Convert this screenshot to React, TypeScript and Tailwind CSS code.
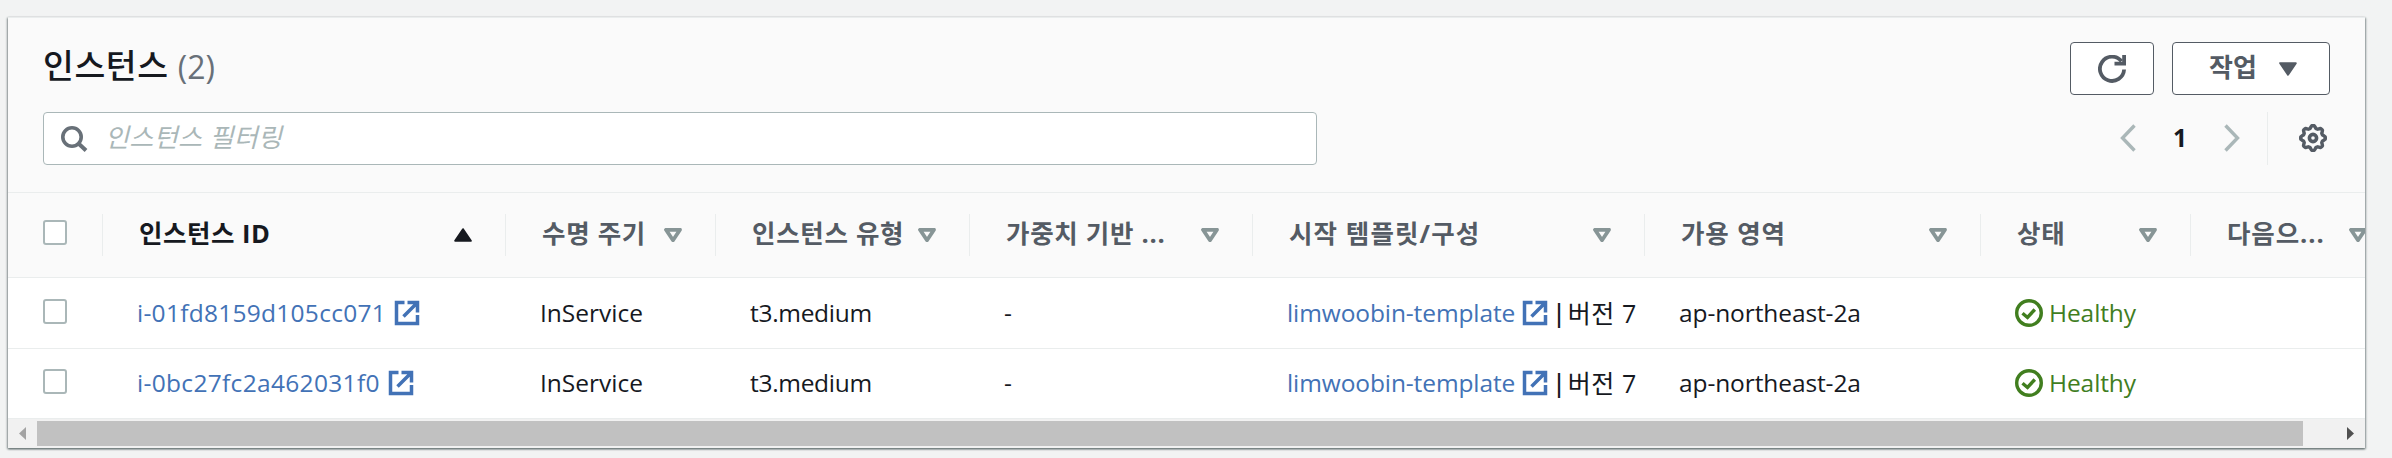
import React from "react";

const cols = ["w-[403px]", "w-[210px]", "w-[254px]", "w-[283px]", "w-[392px]", "w-[336px]", "w-[210px]", "w-[210px]"];
const heads = [
  { text: "인스턴스 ID", tracking: "tracking-[0.5px]" },
  { text: "수명 주기", tracking: "tracking-[0.7px]" },
  { text: "인스턴스 유형", tracking: "tracking-[0.7px]" },
  { text: "가중치 기반 ...", tracking: "tracking-[0.7px]" },
  { text: "시작 템플릿/구성", tracking: "tracking-[1.1px]" },
  { text: "가용 영역", tracking: "tracking-[0.9px]" },
  { text: "상태", tracking: "tracking-[0.9px]" },
  { text: "다음으...", tracking: "tracking-[0.9px]" },
];
const ids = [
  { id: "i-01fd8159d105cc071", tracking: "tracking-[0.27px]" },
  { id: "i-0bc27fc2a462031f0", tracking: "tracking-[0.32px]" },
];

const Checkbox = () => <div className="h-[25px] w-6 rounded-[3px] border-2 border-[#aab7b8] bg-white" />;

const External = () => (
  <svg className="h-[26px] w-[26px] shrink-0" viewBox="0 0 26 26" fill="none" stroke="#4272b6" strokeWidth="3.5">
    <path d="M10.500 2.500H2.500v21h21V15" />
    <path d="M13.500 2.500h10v10M23 3L9.500 16.500" />
  </svg>
);

const Check = () => (
  <svg className="h-7 w-7 shrink-0" viewBox="0 0 28 28" fill="none" stroke="#417e1f" strokeWidth="3.4">
    <circle cx="14" cy="14" r="12.3" />
    <path d="M7.5 14.2l5 4.3 7.3-8" />
  </svg>
);

const Sort = ({ active }: { active?: boolean }) =>
  active ? (
    <svg className="h-[14px] w-[18px] shrink-0" viewBox="0 0 18 14">
      <path d="M9 1.2L16.8 12.8H1.2z" fill="#16191f" stroke="#16191f" strokeWidth="2" strokeLinejoin="round" />
    </svg>
  ) : (
    <svg className="h-[14px] w-[18px] shrink-0" viewBox="0 0 18 14">
      <path d="M2 1.8h14L9 12.2z" fill="none" stroke="#879596" strokeWidth="3.8" strokeLinejoin="round" />
    </svg>
  );

const TEETH = 8;
const gearPath =
  Array.from({ length: TEETH * 8 }, (_, i) => {
    const a = (i / (TEETH * 8)) * Math.PI * 2;
    const r = 11.1 + 1.3 * Math.tanh(2 * Math.cos(a * TEETH));
    return `${i ? "L" : "M"}${(14 + r * Math.cos(a)).toFixed(2)} ${(14 + r * Math.sin(a)).toFixed(2)}`;
  }).join("") + "Z";

export default function App() {
  return (
    <div className="h-[458px] w-[2392px] overflow-hidden bg-[#f2f3f3] pt-[17px] pl-2 font-['Open_Sans','Noto_Sans_CJK_KR',sans-serif] text-[24.5px] leading-9 whitespace-nowrap text-[#16191f]">
      <div className="h-[431px] w-[2357px] overflow-hidden border-t border-[#eaeded] bg-white shadow-[0_1px_2px_0_#5f6b6c,1px_1px_2px_0_#b0b8b8,-1px_1px_2px_0_#b0b8b8]">
        <div className="h-[175px] border-b border-[#eaeded] bg-[#fafafa] pt-6 pr-[35px] pl-[35px]">
          <div className="flex h-[53px] items-center justify-between">
            <h1 className="flex items-center gap-[9px] pb-[7px] text-[32px]">
              <span className="text-[33.5px] font-medium tracking-[0.6px]">인스턴스</span>
              <span className="pt-[3px] text-[#687078]">(2)</span>
            </h1>
            <div className="flex gap-[18px]">
              <button className="flex h-[53px] w-[84px] items-center justify-center rounded border border-[#545b64] bg-white">
                <svg className="h-7 w-7" viewBox="0 0 28 28" fill="none" stroke="#545b64" strokeWidth="3.8">
                  <path d="M26.100 14.500A12.100 12.100 0 1 1 23.500 6.300" />
                  <path d="M26.100 0v8.600H16.500" />
                </svg>
              </button>
              <button className="flex h-[53px] w-[158px] items-center justify-center gap-[22px] rounded border border-[#545b64] bg-white pl-1 font-bold text-[#545b64]">
                <span className="pb-[3px] text-[26px]">작업</span>
                <svg className="h-[14px] w-[18px]" viewBox="0 0 18 14">
                  <path d="M1.2 1.2h15.6L9 12.8z" fill="#545b64" stroke="#545b64" strokeWidth="2" strokeLinejoin="round" />
                </svg>
              </button>
            </div>
          </div>
          <div className="mt-[17px] flex h-[53px] items-center justify-between">
            <div className="flex h-[53px] w-[1274px] items-center rounded border border-[#aab7b8] bg-white pl-[17px]">
              <svg className="h-[26px] w-[27px]" viewBox="0 0 27 26" fill="none" stroke="#687078">
                <circle cx="11" cy="11" r="9.2" strokeWidth="3.6" />
                <path d="M17.5 17.5l7.5 7" strokeWidth="4" />
              </svg>
              <span className="ml-[17px] pb-[3px] text-[26px] tracking-[0.4px] text-[#aab7b8] italic">인스턴스 필터링</span>
            </div>
            <div className="flex h-[53px] items-center">
              <svg className="mb-px h-[28px] w-4" viewBox="0 0 16 28" fill="none" stroke="#aab7b8" strokeWidth="3.4">
                <path d="M14.500 1.500L2.500 14l12 12.500" />
              </svg>
              <span className="w-[88px] pb-px text-center text-[24.5px] font-bold">1</span>
              <svg className="mb-px h-[28px] w-4" viewBox="0 0 16 28" fill="none" stroke="#aab7b8" strokeWidth="3.4">
                <path d="M1.500 1.500l12 12.500-12 12.500" />
              </svg>
              <div className="mr-[31px] ml-[27px] h-[53px] w-px bg-[#eaeded]" />
              <svg className="mr-[3px] mb-px h-7 w-7" viewBox="0 0 28 28" fill="none" stroke="#545b64" strokeWidth="3.4" strokeLinejoin="round">
                <path d={gearPath} />
                <circle cx="14" cy="14" r="3.600" strokeWidth="3.6" />
              </svg>
            </div>
          </div>
        </div>
        <div className="flex h-[85px] w-[2400px] items-center border-b border-[#eaeded] bg-[#fafafa]">
          <div className="flex h-[42px] w-[95px] shrink-0 items-center border-r border-[#eaeded] pb-[5px] pl-[35px]"><Checkbox /></div>
          {heads.map((h, i) => (
            <div key={h.text} className={`${cols[i]} flex h-[42px] shrink-0 items-center justify-between border-r border-[#eaeded] pr-[33px] pl-[36px] text-[25.5px] font-bold ${i ? "text-[#545b64]" : ""}`}>
              <span className={`${h.tracking} pb-[5px]`}>{h.text}</span>
              <Sort active={i === 0} />
            </div>
          ))}
        </div>
        {ids.map(({ id, tracking }, i) => (
          <div key={id} className={`flex w-[2400px] items-center border-b border-[#eaeded] ${i ? "h-[70px] pb-px" : "h-[71px]"} *:shrink-0`}>
            <div className="w-[95px] pb-[3px] pl-[35px]"><Checkbox /></div>
            <div className="flex w-[403px] items-center gap-[8px] pl-[34px] text-[#4272b6]"><span className={tracking}>{id}</span><External /></div>
            <div className="w-[210px] pl-[34px]">InService</div>
            <div className="w-[254px] pl-[34px] tracking-[-0.3px]">t3.medium</div>
            <div className="w-[283px] pl-[34px]">-</div>
            <div className="flex w-[392px] items-center pl-[34px]">
              <span className="mr-[7px] tracking-[-0.1px] text-[#4272b6]">limwoobin-template</span>
              <External />
              <span className="-mr-[3px] ml-[4px] font-semibold">|</span>
              <span className="ml-[5px] text-[25px] tracking-[0.6px]">버전 7</span>
            </div>
            <div className="w-[336px] pl-[34px] tracking-[-0.1px]">ap-northeast-2a</div>
            <div className="flex w-[210px] items-center gap-[6px] pl-[34px] tracking-[-0.1px] text-[#417e1f]"><Check />Healthy</div>
          </div>
        ))}
        <div className="flex h-[29px] items-center justify-between bg-[#f1f1f1] pr-[11px] pl-[11px]">
          <svg className="h-[13px] w-[7px]" viewBox="0 0 7 13"><path d="M7 0v13L0 6.500z" fill="#a3a3a3" /></svg>
          <div className="mr-auto ml-[11px] h-[25px] w-[2266px] bg-[#c1c1c1]" />
          <svg className="h-[13px] w-[7px]" viewBox="0 0 7 13"><path d="M0 0v13l7-6.500z" fill="#505050" /></svg>
        </div>
      </div>
    </div>
  );
}
